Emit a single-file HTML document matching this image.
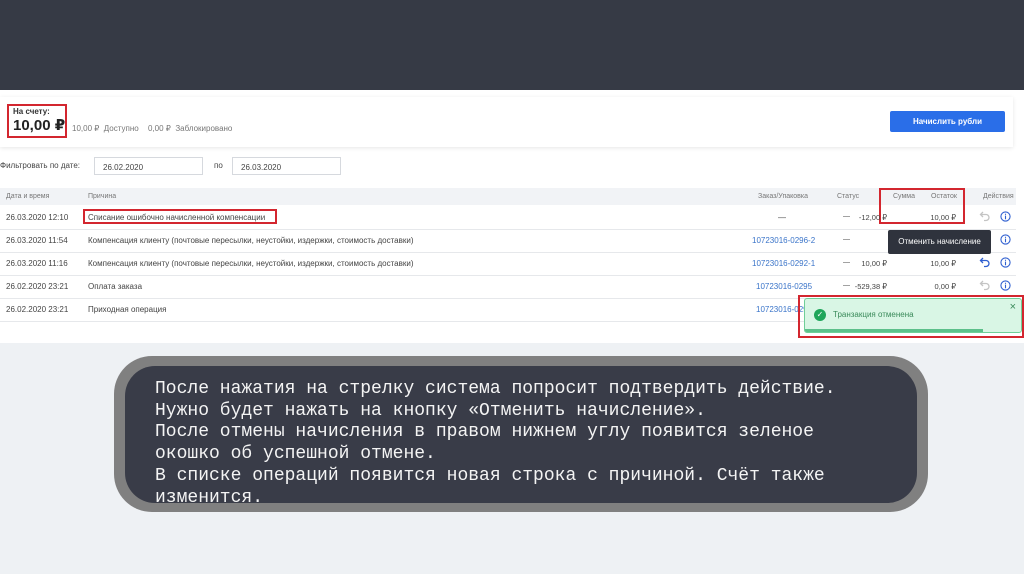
<!DOCTYPE html><html><head><meta charset="utf-8"><style>
*{margin:0;padding:0;box-sizing:border-box}
body{width:1024px;height:574px;overflow:hidden;background:#eef1f4;font-family:"Liberation Sans","DejaVu Sans",sans-serif;position:relative;color:#333}
.a{position:absolute;white-space:nowrap}
.top{position:absolute;left:0;top:0;width:1024px;height:90px;background:#363a45}
.page{position:absolute;left:0;top:90px;width:1024px;height:253px;background:#fff}
.card{position:absolute;left:0;top:97px;width:1013px;height:50px;background:#fff;box-shadow:0 1px 4px rgba(0,0,0,.1)}
.red{position:absolute;border:2px solid #d3262f}
.f{font-size:8px;color:#444}
.g{font-size:8px;color:#777}
.inp{position:absolute;height:18px;border:1px solid #d6d9de;background:#fff;font-size:8px;padding:5px 0 0 8px;color:#444}
.hdr{position:absolute;left:0;top:188px;width:1016px;height:17px;background:#f1f3f6}
.line{position:absolute;left:0;width:1016px;height:1px;background:#e6e8eb}
.r{text-align:right}
.lnk{color:#3a74c9}
.ic{position:absolute;width:11px;height:11px}
.ar{position:absolute;width:12px;height:12px}
.call{position:absolute;left:114px;top:356px;width:814px;height:156px;background:#808080;border-radius:38px}
.inner{position:absolute;left:125px;top:366px;width:792px;height:137px;background:#393c48;border-radius:30px}
.txt{position:absolute;left:155px;top:379px;font-family:"Liberation Mono","DejaVu Sans Mono",monospace;font-size:18px;line-height:21.7px;color:#f4f4f4;white-space:pre}
.s{font-size:7.5px}
</style></head><body>
<svg width="0" height="0" style="position:absolute"><defs>
<symbol id="i" viewBox="0 0 12 12"><circle cx="6" cy="6" r="5" fill="none" stroke="#2f5fd0" stroke-width="1.2"/><rect x="5.4" y="5" width="1.2" height="4" fill="#2f5fd0"/><rect x="5.4" y="3" width="1.2" height="1.2" fill="#2f5fd0"/></symbol>
<symbol id="u" viewBox="0 0 12 12"><path d="M4 2 L1.5 4.5 L4 7 M1.5 4.5 H7 A3 3 0 0 1 7 10.5 H5" fill="none" stroke="currentColor" stroke-width="1.3"/></symbol>
</defs></svg>
<div class="top"></div>
<div class="page"></div>
<div class="card"></div>
<div class="red" style="left:7px;top:104px;width:60px;height:34px"></div>
<div class="a" style="left:13px;top:107px;font-size:8px;font-weight:bold;color:#333">На счету:</div>
<div class="a" style="left:13px;top:116px;font-size:15px;font-weight:bold;color:#222">10,00 ₽</div>
<div class="a g" style="left:72px;top:124px">10,00 ₽ &nbsp;Доступно</div>
<div class="a g" style="left:148px;top:124px">0,00 ₽ &nbsp;Заблокировано</div>
<div class="a" style="left:890px;top:111px;width:115px;height:21px;background:#2a6ee8;border-radius:2px;color:#fff;font-size:8px;font-weight:bold;text-align:center;line-height:21px">Начислить рубли</div>
<div class="a f" style="left:0;top:161px">Фильтровать по дате:</div>
<div class="inp" style="left:94px;top:157px;width:109px">26.02.2020</div>
<div class="a f" style="left:214px;top:161px">по</div>
<div class="inp" style="left:232px;top:157px;width:109px">26.03.2020</div>
<div class="hdr"></div>
<div class="a g" style="left:6px;top:193px;font-size:7px">Дата и время</div>
<div class="a g" style="left:88px;top:193px;font-size:7px">Причина</div>
<div class="a g" style="left:758px;top:193px;font-size:7px">Заказ/Упаковка</div>
<div class="a g" style="left:837px;top:193px;font-size:7px">Статус</div>
<div class="a g" style="left:893px;top:193px;font-size:7px">Сумма</div>
<div class="a g" style="left:931px;top:193px;font-size:7px">Остаток</div>
<div class="a g" style="left:983px;top:193px;font-size:7px">Действия</div>
<div class="line" style="top:229px"></div><div class="line" style="top:252px"></div><div class="line" style="top:275px"></div><div class="line" style="top:298px"></div><div class="line" style="top:321px"></div>
<div class="a f" style="left:6px;top:213px">26.03.2020 12:10</div>
<div class="a f" style="left:6px;top:236px">26.03.2020 11:54</div>
<div class="a f" style="left:6px;top:259px">26.03.2020 11:16</div>
<div class="a f" style="left:6px;top:282px">26.02.2020 23:21</div>
<div class="a f" style="left:6px;top:305px">26.02.2020 23:21</div>
<div class="red" style="left:83px;top:209px;width:194px;height:15px"></div>
<div class="a f" style="left:88px;top:213px">Списание ошибочно начисленной компенсации</div>
<div class="a f" style="left:88px;top:236px">Компенсация клиенту (почтовые пересылки, неустойки, издержки, стоимость доставки)</div>
<div class="a f" style="left:88px;top:259px">Компенсация клиенту (почтовые пересылки, неустойки, издержки, стоимость доставки)</div>
<div class="a f" style="left:88px;top:282px">Оплата заказа</div>
<div class="a f" style="left:88px;top:305px">Приходная операция</div>
<div class="a f" style="left:778px;top:213px">—</div>
<div class="a f lnk" style="left:752px;top:236px">10723016-0296-2</div>
<div class="a f lnk" style="left:752px;top:259px">10723016-0292-1</div>
<div class="a f lnk" style="left:756px;top:282px">10723016-0295</div>
<div class="a f lnk" style="left:756px;top:305px">10723016-0295</div>
<div class="a f" style="left:843px;top:213px;font-size:7px">—</div><div class="a f" style="left:843px;top:236px;font-size:7px">—</div><div class="a f" style="left:843px;top:259px;font-size:7px">—</div><div class="a f" style="left:843px;top:282px;font-size:7px">—</div>
<div class="red" style="left:879px;top:188px;width:86px;height:36px"></div>
<div class="a f r s" style="left:850px;top:213px;width:37px">-12,00 ₽</div>
<div class="a f r s" style="left:920px;top:213px;width:36px">10,00 ₽</div>
<div class="a f r s" style="left:850px;top:259px;width:37px">10,00 ₽</div>
<div class="a f r s" style="left:920px;top:259px;width:36px">10,00 ₽</div>
<div class="a f r s" style="left:830px;top:282px;width:57px">-529,38 ₽</div>
<div class="a f r s" style="left:920px;top:282px;width:36px">0,00 ₽</div>
<svg class="ar" style="left:979px;top:210px;color:#c4c4c4"><use href="#u"/></svg>
<svg class="ar" style="left:979px;top:256px;color:#2f5fd0"><use href="#u"/></svg>
<svg class="ar" style="left:979px;top:279px;color:#c4c4c4"><use href="#u"/></svg>
<svg class="ic" style="left:1000px;top:211px"><use href="#i"/></svg>
<svg class="ic" style="left:1000px;top:234px"><use href="#i"/></svg>
<svg class="ic" style="left:1000px;top:257px"><use href="#i"/></svg>
<svg class="ic" style="left:1000px;top:280px"><use href="#i"/></svg>
<div class="a" style="left:888px;top:230px;width:103px;height:24px;background:#2f333d;border-radius:2px;color:#fff;font-size:8px;text-align:center;line-height:24px">Отменить начисление</div>
<div class="red" style="left:798px;top:295px;width:226px;height:43px"></div>
<div class="a" style="left:804px;top:298px;width:218px;height:35px;background:#d9f6e5;border:1px solid #6fcf98;border-radius:3px;overflow:hidden">
<div style="position:absolute;left:0;bottom:0;width:178px;height:3px;background:#5cc08a"></div>
<div style="position:absolute;left:9px;top:10px;width:12px;height:12px;border-radius:50%;background:#1fa65a;color:#fff;font-size:8px;text-align:center;line-height:12px">✓</div>
<div style="position:absolute;left:28px;top:11px;font-size:8px;color:#3a8a5a">Транзакция отменена</div>
<div style="position:absolute;right:5px;top:2px;font-size:11px;color:#3a8a5a">×</div>
</div>
<div class="call"></div><div class="inner"></div>
<div class="txt">После нажатия на стрелку система попросит подтвердить действие.
Нужно будет нажать на кнопку «Отменить начисление».
После отмены начисления в правом нижнем углу появится зеленое
окошко об успешной отмене.
В списке операций появится новая строка с причиной. Счёт также
изменится.</div>
</body></html>
